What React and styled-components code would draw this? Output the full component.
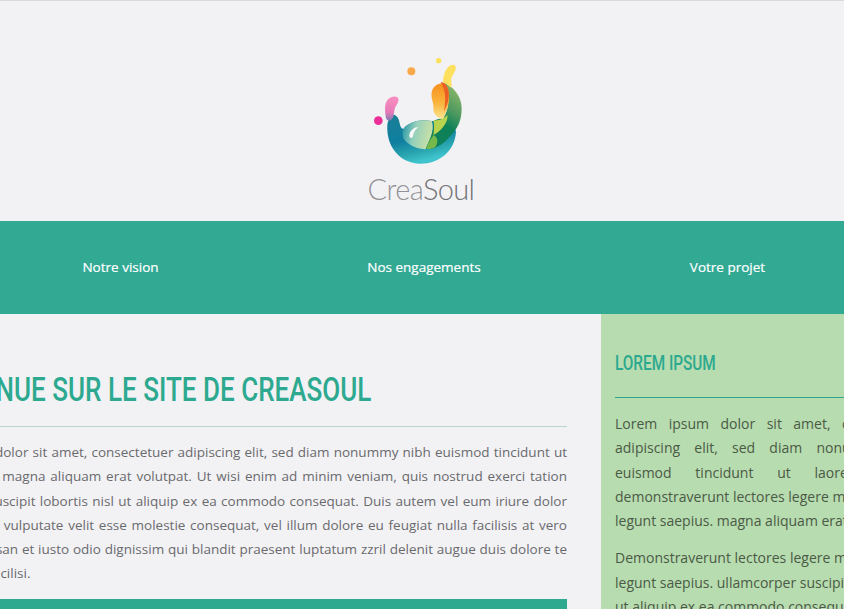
import React from 'react'
import styled, { createGlobalStyle } from 'styled-components'

const GlobalStyle = createGlobalStyle`
  html, body {
    margin: 0;
    padding: 0;
    overflow: hidden;
    background: #f2f2f5;
  }
`

const Viewport = styled.div`
  width: 844px;
  height: 609px;
  overflow: hidden;
  font-family: "Open Sans", "Liberation Sans", sans-serif;
`

const Page = styled.div`
  width: 1042px;
  margin-left: -97px;
`

const Header = styled.header`
  height: 221px;
  border-top: 1px solid #d9d9dc;
  display: flex;
  flex-direction: column;
  align-items: center;
  padding-top: 54px;
  box-sizing: border-box;
`

const LogoMark = styled.svg`
  width: 100px;
  height: 112px;
  display: block;
  margin-left: -8px;
`

const LogoText = styled.div`
  font-family: Lato, "Open Sans", sans-serif;
  font-size: 29px;
  font-weight: 300;
  line-height: 30px;
  color: #929295;
  margin: 7px 0 0 -6px;
  letter-spacing: -0.6px;
`

const LogoStrong = styled.span`
  color: #737376;
`

const Nav = styled.nav`
  height: 93px;
  background: #31a993;
  display: flex;
  justify-content: center;
  align-items: center;
`

const NavItem = styled.a`
  width: 303.5px;
  text-align: center;
  color: #fff;
  font-size: 13.5px;
  font-weight: 500;
  margin-top: -2px;
  -webkit-text-stroke: 0.2px #fff;
`

const Columns = styled.div`
  display: flex;
  background: #f2f2f5;
`

const Main = styled.main`
  width: 698px;
  box-sizing: border-box;
  padding: 54px 34px 0 4px;
`

const Title = styled.h1`
  margin: 0;
  padding-bottom: 17px;
  border-bottom: 1px solid #b9d3cf;
  font-size: 34px;
  line-height: 40px;
  font-weight: 500;
  color: #2ca98f;
  white-space: nowrap;
`

const SideTitle = styled.h2`
  margin: 0;
  padding-bottom: 21px;
  border-bottom: 1px solid #2fa58c;
  font-size: 21px;
  line-height: 26px;
  font-weight: 500;
  color: #2ca98f;
  white-space: nowrap;
`

const Narrow = styled.span`
  display: inline-block;
  font-family: Roboto, "Open Sans", sans-serif;
  transform: scaleX(${props => props.$scale});
  transform-origin: left center;
`

const Text = styled.p`
  margin: ${props => (props.$side ? '14px' : '13px')} 0 0;
  font-size: ${props => (props.$side ? '14px' : '13.5px')};
  line-height: 24.3px;
  color: ${props => (props.$side ? '#4b5a46' : '#6a6a6d')};
  & + & {
    margin-top: 13px;
  }
`

const Line = styled.span`
  display: block;
  white-space: nowrap;
  text-align: justify;
  text-align-last: ${props => (props.$last ? 'left' : 'justify')};
`

const Banner = styled.div`
  height: 40px;
  margin-top: 13px;
  background: #2ca98f;
`

const Sidebar = styled.aside`
  width: 344px;
  box-sizing: border-box;
  padding: 35px 18px 0 14px;
  background: #b7dcaf;
`

const mainLines = [
  'Lorem ipsum dolor sit amet, consectetuer adipiscing elit, sed diam nonummy nibh euismod tincidunt ut',
  'laoreet dolore magna aliquam erat volutpat. Ut wisi enim ad minim veniam, quis nostrud exerci tation',
  'ullamcorper suscipit lobortis nisl ut aliquip ex ea commodo consequat. Duis autem vel eum iriure dolor',
  'in hendrerit in vulputate velit esse molestie consequat, vel illum dolore eu feugiat nulla facilisis at vero',
  'eros et accumsan et iusto odio dignissim qui blandit praesent luptatum zzril delenit augue duis dolore te',
]

const sideLines = [
  'Lorem ipsum dolor sit amet, consectetuer',
  'adipiscing elit, sed diam nonummy nibh',
  'euismod tincidunt ut laoreet dolore',
  'demonstraverunt lectores legere me lius quod ii',
  'legunt saepius. magna aliquam erat volutpat. Ut',
]

const sideLines2 = [
  'Demonstraverunt lectores legere me lius quod ii',
  'legunt saepius. ullamcorper suscipit lobortis nisl',
  'ut aliquip ex ea commodo consequat. Duis autem',
]

function Logo() {
  return (
    <LogoMark viewBox="0 0 300 336" role="img" aria-label="CreaSoul">
      <defs>
        <linearGradient id="bowl" x1="0" y1="0" x2="0.35" y2="1">
          <stop offset="0" stopColor="#1b7f96" />
          <stop offset="0.55" stopColor="#0f7fa0" />
          <stop offset="0.82" stopColor="#2aa6b0" />
          <stop offset="1" stopColor="#3fc4cd" />
        </linearGradient>
        <linearGradient id="pale" x1="0" y1="0" x2="1" y2="0.2">
          <stop offset="0" stopColor="#1f93a6" />
          <stop offset="0.45" stopColor="#94cfbb" />
          <stop offset="1" stopColor="#c7e0a8" />
        </linearGradient>
        <linearGradient id="ribbon" x1="0.7" y1="0" x2="0.3" y2="1">
          <stop offset="0" stopColor="#8fb86a" />
          <stop offset="0.35" stopColor="#4f9a60" />
          <stop offset="0.6" stopColor="#0f8158" />
          <stop offset="1" stopColor="#0f8158" />
        </linearGradient>
        <linearGradient id="orange" x1="0" y1="0" x2="0" y2="1">
          <stop offset="0" stopColor="#f78f1e" />
          <stop offset="0.55" stopColor="#fab43c" />
          <stop offset="1" stopColor="#fbe590" />
        </linearGradient>
        <linearGradient id="pink" x1="0" y1="0" x2="0" y2="1">
          <stop offset="0" stopColor="#f88fc0" />
          <stop offset="0.65" stopColor="#e77ab8" />
          <stop offset="1" stopColor="#7d7db0" />
        </linearGradient>
      </defs>
      <circle cx="124" cy="49" r="12" fill="#f9a94a" />
      <circle cx="206" cy="17" r="8" fill="#fbe25a" />
      <circle cx="25" cy="197" r="13" fill="#ec2d98" />
      <path d="M52 210C55 190 65 172 78 182C94 196 85 218 100 222C118 200 150 192 185 198L250 200L258 230C255 290 205 327 150 326C90 325 48 275 52 210Z" fill="url(#bowl)" />
      <path d="M45 160C45 135 62 122 78 125C90 127 86 142 78 152C72 162 72 175 70 185C64 200 52 200 48 190C46 180 45 170 45 160Z" fill="url(#pink)" />
      <path d="M100 222C118 200 150 192 185 198C192 215 188 240 170 282C145 285 112 270 100 250C97 240 97 230 100 222Z" fill="url(#pale)" />
      <path d="M222 82C250 95 275 125 275 160C275 200 262 222 235 250C215 272 190 284 168 282C172 262 190 244 192 198C200 192 215 192 220 190C236 165 242 130 222 82Z" fill="url(#ribbon)" />
      <path d="M170 282C172 266 182 254 190 240C205 248 205 262 196 276C188 281 178 283 170 282Z" fill="#76b94a" />
      <path d="M190 196C205 198 222 192 232 180C236 195 220 225 190 240C192 225 194 210 190 196Z" fill="#b8d44e" />
      <path d="M185 112C190 85 225 72 235 105C242 135 232 170 218 192C200 190 190 175 190 160C192 145 182 130 185 112Z" fill="url(#orange)" />
      <path d="M212 81C226 82 232 92 235 105C240 128 232 150 222 170C228 135 228 108 212 81Z" fill="#ec5f24" />
      <path d="M222 60C226 40 244 22 256 32C262 46 248 56 244 70C242 80 248 92 242 98C234 90 226 84 219 82C219 74 220 66 222 60Z" fill="#fde060" />
      <path d="M118 240C122 226 132 216 146 217C136 224 130 232 129 244C126 252 117 250 118 240Z" fill="#f7f9f9" />
    </LogoMark>
  )
}

export default function App() {
  return (
    <Viewport>
      <GlobalStyle />
      <Page>
        <Header>
          <Logo />
          <LogoText>
            Crea<LogoStrong>Soul</LogoStrong>
          </LogoText>
        </Header>
        <Nav>
          <NavItem>Notre vision</NavItem>
          <NavItem>Nos engagements</NavItem>
          <NavItem>Votre projet</NavItem>
        </Nav>
        <Columns>
          <Main>
            <Title><Narrow $scale={0.766}>BIENVENUE SUR LE SITE DE CREASOUL</Narrow></Title>
            <Text>
              {mainLines.map(line => <Line key={line}>{line}</Line>)}
              <Line $last>feugait nulla facilisi.</Line>
            </Text>
            <Banner />
          </Main>
          <Sidebar>
            <SideTitle><Narrow $scale={0.73}>LOREM IPSUM</Narrow></SideTitle>
            <Text $side>
              {sideLines.map(line => <Line key={line}>{line}</Line>)}
            </Text>
            <Text $side>
              {sideLines2.map(line => <Line key={line}>{line}</Line>)}
            </Text>
          </Sidebar>
        </Columns>
      </Page>
    </Viewport>
  )
}
